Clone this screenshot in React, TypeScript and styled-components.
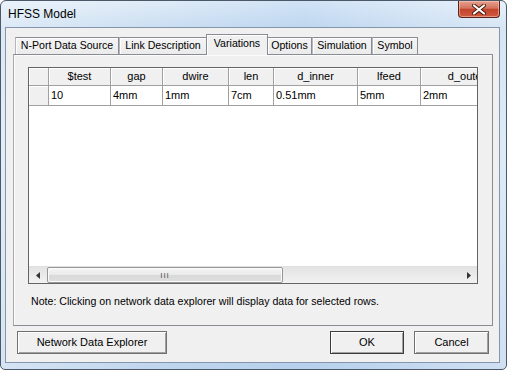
import styled, { createGlobalStyle } from 'styled-components';

const GlobalStyle = createGlobalStyle`
  html, body {
    margin: 0;
    padding: 0;
    background: #fff;
  }
  body {
    font-family: 'Liberation Sans', Arial, sans-serif;
    font-size: 11px;
    color: #000;
  }
`;

const Window = styled.div`
  width: 507px;
  height: 370px;
  box-sizing: border-box;
  border: 1px solid #4b5868;
  border-radius: 6px 6px 5px 5px;
  background:
    linear-gradient(90deg, rgba(255, 255, 255, 0.35) 0%, rgba(255, 255, 255, 0) 30%, rgba(120, 170, 230, 0.15) 60%, rgba(255, 255, 255, 0.25) 100%),
    linear-gradient(180deg, #e0ecf8 0%, #c9ddf1 8%, #d3e4f5 40%, #c0d6ee 100%);
  display: flex;
  flex-direction: column;
  overflow: hidden;
`;

const TitleBar = styled.div`
  height: 26px;
  display: flex;
  align-items: flex-start;
  justify-content: space-between;
  padding-left: 7px;
`;

const Title = styled.div`
  margin-top: 6px;
  font-size: 12px;
  line-height: 14px;
  color: #000;
`;

const CloseButton = styled.div`
  width: 42px;
  height: 17px;
  margin-right: 6px;
  box-sizing: border-box;
  border: 1px solid #5b2418;
  border-top: none;
  border-radius: 0 0 4px 4px;
  background: linear-gradient(180deg, #e6a08e 0%, #d4735e 45%, #c2442b 52%, #cf5a3f 100%);
  box-shadow: inset 0 0 0 1px rgba(255, 210, 200, 0.5);
  display: flex;
  align-items: center;
  justify-content: center;
`;

const Client = styled.div`
  flex: 1;
  margin: 0 6px 6px 4px;
  background: #f0f0f0;
  border: 1px solid #8396ab;
  display: flex;
  flex-direction: column;
  padding: 6px 6px 0 7px;
`;

const TabStrip = styled.div`
  height: 20px;
  display: flex;
  align-items: flex-end;
  padding-left: 2px;
`;

const Tab = styled.div<{ $w: number; $active?: boolean }>`
  position: relative;
  z-index: ${(p) => (p.$active ? 1 : 0)};
  width: ${(p) => p.$w}px;
  height: ${(p) => (p.$active ? 21 : 17)}px;
  margin: 0 ${(p) => (p.$active ? '-1px' : '0')} ${(p) => (p.$active ? '-1px' : '0')};
  box-sizing: border-box;
  border: 1px solid #898c95;
  border-bottom: none;
  border-left-color: ${(p) => (p.$active ? '#898c95' : '#b5b7bd')};
  background: ${(p) => (p.$active ? '#f0f0f0' : 'linear-gradient(180deg, #f4f4f4 0%, #ebebeb 100%)')};
  box-shadow: inset 1px 1px 0 #fff;
  font-size: 10.6px;
  line-height: ${(p) => (p.$active ? 16 : 15)}px;
  text-align: center;
  white-space: nowrap;
`;

const Pane = styled.div`
  height: 272px;
  box-sizing: border-box;
  border: 1px solid #898c95;
  border-left-color: #a7a9ae;
  box-shadow: inset 1px 1px 0 #fcfcfc;
  padding: 12px 14px 0 14px;
  display: flex;
  flex-direction: column;
`;

const GridBox = styled.div`
  height: 217px;
  box-sizing: border-box;
  border: 1px solid #646464;
  background: #fff;
  display: flex;
  flex-direction: column;
  overflow: hidden;
`;

const COLS = '20px 62px 52px 66px 45px 84px 63px 92px';

const GridRow = styled.div<{ $h: number }>`
  display: grid;
  grid-template-columns: ${COLS};
  height: ${(p) => p.$h}px;
  flex-shrink: 0;
`;

const HeadCell = styled.div`
  box-sizing: border-box;
  background: #f0f0f0;
  border-right: 1px solid #a0a0a0;
  border-bottom: 1px solid #a0a0a0;
  box-shadow: inset 1px 1px 0 #fff;
  text-align: center;
  line-height: 17px;
  white-space: nowrap;
  overflow: hidden;
`;

const DataCell = styled.div`
  box-sizing: border-box;
  background: #fff;
  border-right: 1px solid #a0a0a0;
  border-bottom: 1px solid #a0a0a0;
  padding-left: 2px;
  line-height: 19px;
  white-space: nowrap;
  overflow: hidden;
`;

const Filler = styled.div`
  flex: 1;
`;

const ScrollBar = styled.div`
  height: 16px;
  flex-shrink: 0;
  display: flex;
  align-items: stretch;
  background: linear-gradient(180deg, #e3e3e3 0%, #f2f2f2 100%);
  border-top: 1px solid #e0e0e0;
`;

const ArrowBox = styled.div`
  width: 17px;
  display: flex;
  align-items: center;
  justify-content: center;
`;

const Track = styled.div`
  flex: 1;
  display: flex;
  align-items: stretch;
  padding: 0 1px;
`;

const Thumb = styled.div`
  width: 236px;
  box-sizing: border-box;
  border: 1px solid #979797;
  border-radius: 2px;
  background: linear-gradient(180deg, #f6f6f6 0%, #e9e9e9 50%, #d9d9d9 51%, #dedede 100%);
  box-shadow: inset 0 0 0 1px #fbfbfb;
  display: flex;
  align-items: center;
  justify-content: center;
  font-size: 8px;
  letter-spacing: 1px;
  color: #555;
`;

const Note = styled.div`
  margin-top: 11px;
  padding-left: 3px;
  font-size: 10.6px;
  line-height: 13px;
`;

const ButtonRow = styled.div`
  display: flex;
  align-items: center;
  margin-top: 5px;
  padding-left: 4px;
  padding-right: 4px;
  gap: 10px;
`;

const Spacer = styled.div`
  flex: 1;
`;

const Button = styled.div<{ $w: number; $default?: boolean }>`
  width: ${(p) => p.$w}px;
  height: 23px;
  box-sizing: border-box;
  border: 1px solid ${(p) => (p.$default ? '#3c3c3c' : '#707070')};
  background: #f0f0f0;
  box-shadow: inset 1px 1px 0 #fff, inset -1px -1px 0 #a0a0a0;
  text-align: center;
  line-height: 21px;
  font-size: 11px;
`;

const columns = ['$test', 'gap', 'dwire', 'len', 'd_inner', 'lfeed', 'd_outer'];
const values = ['10', '4mm', '1mm', '7cm', '0.51mm', '5mm', '2mm'];

const tabs = [
  { label: 'N-Port Data Source', w: 104 },
  { label: 'Link Description', w: 88 },
  { label: 'Variations', w: 62, active: true },
  { label: 'Options', w: 45 },
  { label: 'Simulation', w: 60 },
  { label: 'Symbol', w: 46 },
];

const App = () => (
  <>
    <GlobalStyle />
    <Window>
      <TitleBar>
        <Title>HFSS Model</Title>
        <CloseButton>
          <svg width="14" height="11" viewBox="0 0 14 11">
            <path d="M2 1.5 L12 9.5 M12 1.5 L2 9.5" stroke="#4a1a10" strokeWidth="4" strokeLinecap="round" />
            <path d="M2 1.5 L12 9.5 M12 1.5 L2 9.5" stroke="#fff" strokeWidth="2.2" strokeLinecap="round" />
          </svg>
        </CloseButton>
      </TitleBar>
      <Client>
        <TabStrip>
          {tabs.map((t) => (
            <Tab key={t.label} $w={t.w} $active={t.active}>
              {t.label}
            </Tab>
          ))}
        </TabStrip>
        <Pane>
          <GridBox>
            <GridRow $h={18}>
              <HeadCell />
              {columns.map((c) => (
                <HeadCell key={c}>{c}</HeadCell>
              ))}
            </GridRow>
            <GridRow $h={20}>
              <HeadCell />
              {values.map((v, i) => (
                <DataCell key={i}>{v}</DataCell>
              ))}
            </GridRow>
            <Filler />
            <ScrollBar>
              <ArrowBox>
                <svg width="4" height="7" viewBox="0 0 4 7">
                  <path d="M4 0 L0 3.5 L4 7 Z" fill="#333" />
                </svg>
              </ArrowBox>
              <Track>
                <Thumb>III</Thumb>
              </Track>
              <ArrowBox>
                <svg width="4" height="7" viewBox="0 0 4 7">
                  <path d="M0 0 L4 3.5 L0 7 Z" fill="#333" />
                </svg>
              </ArrowBox>
            </ScrollBar>
          </GridBox>
          <Note>Note: Clicking on network data explorer will display data for selected rows.</Note>
        </Pane>
        <ButtonRow>
          <Button $w={150}>Network Data Explorer</Button>
          <Spacer />
          <Button $w={74} $default>
            OK
          </Button>
          <Button $w={75}>Cancel</Button>
        </ButtonRow>
      </Client>
    </Window>
  </>
);

export default App;
